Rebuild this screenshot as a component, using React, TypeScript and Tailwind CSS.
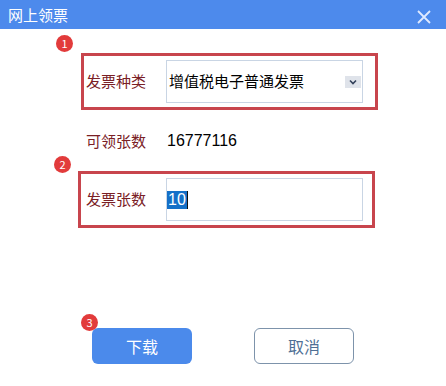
import React from "react";

const FONT = { fontFamily: '"Noto Sans CJK SC", "Liberation Sans", sans-serif' };

// Red numbered marker that sits on top of the annotated area
const Badge: React.FC<{ n: number; className: string }> = ({ n, className }) => (
  <span
    className={`absolute flex h-[17px] w-[17px] items-center justify-center rounded-full bg-[#e23b3b] text-[11px] leading-none text-white ${className}`}
  >
    {n}
  </span>
);

const App: React.FC = () => {
  return (
    <div className="h-[386px] w-[446px] overflow-hidden bg-white" style={FONT}>
      {/* Title bar */}
      <div className="flex h-[29px] items-center justify-between bg-[#4d8aec] pl-[8px] pr-[14px]">
        <span className="text-[15px] leading-none text-white">网上领票</span>
        <svg width="16" height="16" viewBox="0 0 16 16" className="mt-[4px]">
          <path d="M2 2 L14 14 M14 2 L2 14" stroke="#dfeaff" strokeWidth="1.8" />
        </svg>
      </div>

      {/* 发票种类 */}
      <div className="relative ml-[81px] mt-[24px] flex h-[57px] w-[297px] items-center border-[3px] border-[#c8454d] pl-[2px]">
        <Badge n={1} className="left-[-28px] top-[-21px]" />
        <span className="w-[80px] text-[15px] text-[#7a2025]">发票种类</span>
        <div className="flex h-[43px] w-[197px] items-center justify-between border border-[#c9d5e4] pl-[2px] pr-[1px]">
          <span className="text-[15px] text-black">增值税电子普通发票</span>
          <span className="flex h-[12px] w-[16px] items-center justify-center bg-[#dfe3ea]">
            <svg width="8" height="6" viewBox="0 0 8 6">
              <path d="M1 1.5 L4 4.5 L7 1.5" stroke="#33415a" strokeWidth="1.6" fill="none" />
            </svg>
          </span>
        </div>
      </div>

      {/* 可领张数 */}
      <div className="ml-[86px] mt-[21px] flex h-[20px] items-center">
        <span className="w-[81px] text-[15px] text-[#7a2025]">可领张数</span>
        <span className="text-[16px] text-black" style={{ fontFamily: '"Liberation Sans", sans-serif' }}>
          16777116
        </span>
      </div>

      {/* 发票张数 */}
      <div className="relative ml-[78px] mt-[20px] flex h-[57px] w-[297px] items-center border-[3px] border-[#c8454d] pl-[5px]">
        <Badge n={2} className="left-[-27px] top-[-18px]" />
        <span className="w-[80px] text-[15px] text-[#7a2025]">发票张数</span>
        <div className="flex h-[43px] w-[197px] items-center border border-[#c9d5e4]">
          <span
            className="flex h-[18px] items-center bg-[#1470c8] px-[1px] text-[16px] text-white"
            style={{ fontFamily: '"Liberation Sans", sans-serif' }}
          >
            10
          </span>
          <span className="h-[18px] w-[1px] bg-[#111]" />
        </div>
      </div>

      {/* Buttons */}
      <div className="ml-[92px] mt-[100px] flex gap-[62px]">
        <div className="relative">
          <Badge n={3} className="left-[-11px] top-[-14px]" />
          <button className="flex h-[36px] w-[100px] items-center justify-center rounded-[6px] bg-[#4b8aeb] text-[16px] text-white">
            下载
          </button>
        </div>
        <button className="flex h-[36px] w-[100px] items-center justify-center rounded-[6px] border border-[#7d93ab] bg-white text-[16px] text-[#4f6f95]">
          取消
        </button>
      </div>
    </div>
  );
};

export default App;
